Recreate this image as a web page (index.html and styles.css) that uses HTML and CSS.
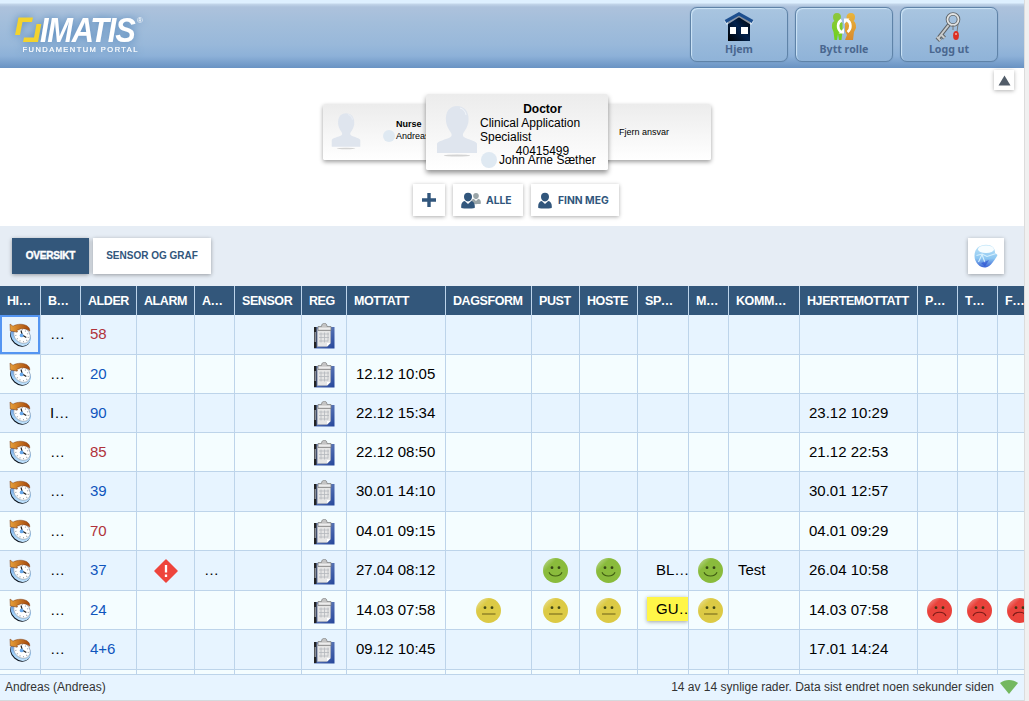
FILE: index.html
```html
<!DOCTYPE html>
<html lang="no">
<head>
<meta charset="utf-8">
<title>Imatis Fundamentum Portal</title>
<link rel="stylesheet" href="styles.css">
</head>
<body>
<svg class="defs" aria-hidden="true">
  <defs>
    <linearGradient id="gHouse" x1="0" y1="1" x2="1" y2="0"><stop offset="0" stop-color="#000"/><stop offset=".5" stop-color="#03224d"/><stop offset="1" stop-color="#000"/></linearGradient>
    <linearGradient id="gGreen" x1="0" y1="0" x2="0" y2="1"><stop offset="0" stop-color="#8fc63f"/><stop offset="1" stop-color="#6fd21c"/></linearGradient>
    <linearGradient id="gOrange" x1="0" y1="0" x2="0" y2="1"><stop offset="0" stop-color="#e9b53c"/><stop offset="1" stop-color="#d98a2c"/></linearGradient>
    <linearGradient id="gArrow" x1="0" y1="0" x2="1" y2="0"><stop offset="0" stop-color="#e8a03a"/><stop offset="1" stop-color="#a34408"/></linearGradient>
    <linearGradient id="gRim" x1="0" y1="0" x2="1" y2="1"><stop offset="0" stop-color="#2659b8"/><stop offset=".6" stop-color="#9ccdf8"/><stop offset="1" stop-color="#d8efff"/></linearGradient>
    <linearGradient id="gBoard" x1="0" y1="0" x2="1" y2="1"><stop offset="0" stop-color="#7f97c8"/><stop offset="1" stop-color="#24459a"/></linearGradient>
    <linearGradient id="gOrb" x1="0" y1="0" x2="0" y2="1"><stop offset="0" stop-color="#b8e2f8"/><stop offset=".6" stop-color="#7fc0f0"/><stop offset="1" stop-color="#2450d0"/></linearGradient>
    <linearGradient id="gShine" x1="0" y1="0" x2=".6" y2=".6"><stop offset="0" stop-color="#fff" stop-opacity=".55"/><stop offset=".5" stop-color="#fff" stop-opacity="0"/></linearGradient>
  </defs>
  <symbol id="clock" viewBox="0 0 22 24">
    <ellipse cx="11.200" cy="14" rx="11" ry="8.800" transform="rotate(42 11.200 14)" fill="#0c141e"/>
    <ellipse cx="11.800" cy="13" rx="11" ry="8.900" transform="rotate(42 11.800 13)" fill="url(#gRim)"/>
    <ellipse cx="13" cy="12.300" rx="8.800" ry="7.400" transform="rotate(42 13 12.300)" fill="#fff" stroke="#8a9097" stroke-width=".5"/>
    <ellipse cx="13" cy="12.500" rx="6.800" ry="5.600" transform="rotate(42 13 12.500)" fill="none" stroke="#a4aab0" stroke-width="1.300" stroke-dasharray="1 2.500"/>
    <path d="M12 7.500l1.300 4.600 4 2.500" stroke="#222" stroke-width="1.200" fill="none"/>
    <circle cx="12.600" cy="12.400" r="1.900" fill="#6aa9ec"/>
    <path d="M1 1l3 2.200C8 .6 16 .3 19.500 4.200c1 1.100 1.300 2.300 1.200 4C17.500 5 12 5 8 7.300L8.500 9 1.300 8z" fill="url(#gArrow)" stroke="#7d3a10" stroke-width=".5"/>
  </symbol>
  <symbol id="clip" viewBox="0 0 21 26">
    <path d="M0 4h20.500v21.500H0z" fill="url(#gBoard)"/>
    <path d="M0 4h2.500v21H0z" fill="#222"/><path d="M.5 9h1.500v10H.5z" fill="#8a8d94"/>
    <path d="M3.500 6h13v14l-3.500 3.500H3.500z" fill="#e6e6e6" stroke="#b5b5b5" stroke-width=".5"/>
    <path d="M4 3.500h3.500C7.500 1 9 .3 10.300.3s2.700.7 2.700 3.200h4v4H4z" fill="#c4c4c4" stroke="#7d7d7d" stroke-width=".7"/>
    <path d="M4.700 4.600h11.600v2H4.700z" fill="#ededed"/>
    <path d="M5 11h10M5 14.500h10M5 18h9M7 9.500v10M10.500 9.500v10M14 9.500v9" stroke="#b4b7bc" stroke-width=".8"/>
    <path d="M13 23.500l3.500-3.500h-3.500z" fill="#fff"/>
  </symbol>
  <symbol id="eyes" viewBox="0 0 25 25">
    <circle cx="12.500" cy="12.500" r="12.500" fill="url(#gShine)"/>
    <circle cx="9" cy="9.700" r="1.400" fill="#27330f" fill-opacity=".85"/><circle cx="16" cy="9.700" r="1.400" fill="#27330f" fill-opacity=".85"/>
  </symbol>
  <symbol id="happy" viewBox="0 0 25 25"><circle cx="12.500" cy="12.500" r="12.500" fill="#8abb3c"/><use href="#eyes"/><path d="M6 14.300c2 5 11 5 13 0" fill="none" stroke="#3f5c12" stroke-width="1.100"/></symbol>
  <symbol id="flat" viewBox="0 0 25 25"><circle cx="12.500" cy="12.500" r="12.500" fill="#dcca45"/><use href="#eyes"/><path d="M6 16h13.500" stroke="#7e711f" stroke-width="1.200"/></symbol>
  <symbol id="sad" viewBox="0 0 25 25"><circle cx="12.500" cy="12.500" r="12.500" fill="#e9423b"/><use href="#eyes"/><path d="M6 18c2-5 11-5 13 0" fill="none" stroke="#7b1b17" stroke-width="1.100"/></symbol>
  <symbol id="alert" viewBox="0 0 24 24"><path d="M12 1l11 11-11 11L1 12z" fill="#ee443c" stroke="#ee443c" stroke-width="1.500" stroke-linejoin="round"/><path d="M12 6v7.500M12 15.500v2.500" stroke="#fff" stroke-width="2.300"/></symbol>
  <symbol id="avatar" viewBox="0 0 42 52">
    <ellipse cx="21" cy="50.500" rx="13" ry="1" fill="#d3d3d3"/>
    <path d="M1 48V38.500C3 35 14 34 15.500 31c.5-2-.5-3.500-2-5.500-2-3-3-6-3.500-9C9 6 14 1 21 1s12.500 5 11.500 15.500c-.5 3-1.500 6-3.500 9-1.500 2-2.500 3.500-2 5.500C28.500 34 39 35 41 38.500V48z" fill="#dfe5ee"/>
    <path d="M24 3c3 .8 5.500 3 6 7" fill="none" stroke="#f3f6fa" stroke-width=".9"/>
  </symbol>
  <symbol id="person" viewBox="0 0 14 16"><path d="M3 4.300C3 1.800 4.500.3 7 .3s4 1.500 4 4C11 6.500 9.500 9 7 9S3 6.500 3 4.300zM.3 15.500c-.5-4 .7-6.500 3.500-7L7 11.500l3.200-3c2.800.5 4 3 3.500 7-3 .7-10.400.7-13.400 0z" fill="currentColor"/></symbol>
</svg>

<div class="portal">
  <header class="top">
    <svg class="logo" width="150" height="60" viewBox="0 0 150 60">
      <path d="M18.500 17.500H33l-1 4.500h-9.500L20 35h-5z" fill="#f3d32e"/>
      <path d="M36.500 24h4.800L38 42H23l1-4.500h10z" fill="#f3d32e"/>
      <g transform="scale(.92 1.05)"><text class="logo-name" x="43.500" y="40" textLength="104">IMATIS</text></g>
      <text class="logo-reg" x="137" y="23">®</text>
      <text class="logo-sub" x="22.500" y="52" textLength="115">FUNDAMENTUM PORTAL</text>
    </svg>
    <nav class="nav">
      <a class="nav-btn"><svg width="30" height="30" viewBox="0 0 30 30"><path d="M4 10l11-7 11 7v19H4z" fill="url(#gHouse)"/><path d="M1.500 11L15 2.500 28.500 11" fill="none" stroke="#fff" stroke-width="4.600" opacity=".55"/><path d="M1.500 9.500L15 1.800l13.500 7.700" fill="none" stroke="#1d4f8f" stroke-width="3.200"/><path d="M6 15h6v7H6zM17 15h7v7h-7z" fill="#fff"/></svg><span>Hjem</span></a>
      <a class="nav-btn"><svg width="30" height="30" viewBox="0 0 30 30"><path d="M8 1c3 0 4 2 4 4 0 1.500-1 3-1.500 4l3 2v8l-1 9H10l-1-6-1 6H5.500L4.500 20 3 16c0-4 0-6 2.500-7C4.500 8 4 6.500 4 5c0-2 1-4 4-4z" fill="url(#gGreen)"/><path d="M22 1c3 0 4 2 4 4 0 1.500-.5 3-1.500 4 2 1 2.500 3 2.500 7l-2 4-1 8h-8l2-5-2-4v-8l3-2c-.7-1-1.500-2.500-1.500-4 0-2 1.500-4 4.500-4z" fill="url(#gOrange)"/><path d="M12.500 8c-4.500 2.500-4.500 9-.5 12M18 8c4.500 2.500 4.500 9 .5 12" fill="none" stroke="#fff" stroke-width="2.600"/><path d="M9.500 21.500h5.500v-5.500zM20.500 6.500h-5.500v5.500z" fill="#fff"/></svg><span>Bytt rolle</span></a>
      <a class="nav-btn"><svg width="30" height="30" viewBox="0 0 30 30"><path d="M15.500 12L4.500 26M7.500 23l3 3M3 25l3.500 3.500" stroke="#5f6468" stroke-width="4" fill="none"/><path d="M15.500 12L4.500 26M7.500 23l3 3M3 25l3.500 3.500" stroke="#c9cccd" stroke-width="2" fill="none"/><circle cx="19" cy="7.500" r="5.500" fill="none" stroke="#62676b" stroke-width="3.600"/><circle cx="19" cy="7.500" r="5.500" fill="none" stroke="#e2e4e4" stroke-width="1.800"/><path d="M19 13v5M24 12l-1 8" stroke="#777" stroke-width="1"/><ellipse cx="22" cy="23.500" rx="2.900" ry="4.500" fill="#dc2f24"/><circle cx="22" cy="22" r="1" fill="#f4b0a8"/></svg><span>Logg ut</span></a>
    </nav>
  </header>

  <section class="roles">
    <button class="collapse" aria-label="Skjul"><svg width="13" height="11" viewBox="0 0 13 11"><path d="M6.500.5L12.500 10.500H.5z" fill="#525d69"/></svg></button>
    <div class="cards">
      <div class="card card-left">
        <svg class="av-small" width="30" height="38"><use href="#avatar"/></svg>
        <div class="nurse"><b>Nurse</b><span><i class="dot"></i>Andreas</span></div>
      </div>
      <div class="card card-main">
        <svg class="av-big" width="42" height="52"><use href="#avatar"/></svg>
        <div class="doctor">
          <b>Doctor</b>
          <p>Clinical Application<br>Specialist</p>
          <span class="phone">40415499</span>
          <span class="name"><i class="dot dot-big"></i>John Arne Sæther</span>
        </div>
      </div>
      <div class="card card-right">Fjern ansvar</div>
    </div>
    <div class="actions">
      <button class="act plus" aria-label="Legg til"><svg width="14" height="14" viewBox="0 0 14 14"><path d="M7 0v14M0 7h14" stroke="#31567c" stroke-width="3.400"/></svg></button>
      <button class="act alle"><svg width="20" height="17" viewBox="0 0 20 17"><g color="#9aa5a8"><use href="#person" x="10" y="0" width="10" height="13"/></g><g color="#31567c"><use href="#person" x="0" y="0" width="14" height="17"/></g></svg>ALLE</button>
      <button class="act finn"><svg width="14" height="17"><use href="#person"/></svg>FINN MEG</button>
    </div>
  </section>

  <div class="tabs">
    <button class="tab active">OVERSIKT</button>
    <button class="tab">SENSOR OG GRAF</button>
    <button class="orb" aria-label="Visning"><svg width="24" height="24" viewBox="0 0 24 24"><path d="M.5 12C.5 4 6 .8 12 .8c6 0 9 3 9 8.200l2.500 2c-2 4-7 12-12 12.500S.5 19 .5 12z" fill="url(#gOrb)" opacity=".9"/><ellipse cx="12" cy="5.300" rx="8" ry="3.800" fill="#f7fdff"/><path d="M2.500 11.500l5.500-1.500 5 2.500 9-3M4.500 18l3.500-7.500 3 8" stroke="#d5effd" stroke-width="1.100" fill="none"/><path d="M7 19l3-1 5-2-4 6.500z" fill="#2a4fd0" opacity=".6"/></svg></button>
  </div>

  <div class="grid">
    <table>
      <colgroup><col class="w41"><col class="w40"><col class="w56"><col class="w58"><col class="w40"><col class="w67"><col class="w45"><col class="w99"><col class="w86"><col class="w48"><col class="w58"><col class="w51"><col class="w40"><col class="w71"><col class="w118"><col class="w40"><col class="w40"><col class="w40"></colgroup>
      <thead><tr><th>HI…</th><th>B…</th><th>ALDER</th><th>ALARM</th><th>A…</th><th>SENSOR</th><th>REG</th><th>MOTTATT</th><th>DAGSFORM</th><th>PUST</th><th>HOSTE</th><th>SP…</th><th>M…</th><th>KOMM…</th><th>HJERTEMOTTATT</th><th>P…</th><th>T…</th><th>F…</th></tr></thead>
      <tbody>
        <tr class="tall"><td class="ic sel"><svg class="clock"><use href="#clock"/></svg></td><td>…</td><td class="red">58</td><td></td><td></td><td></td><td class="ic"><svg class="clip"><use href="#clip"/></svg></td><td></td><td></td><td></td><td></td><td></td><td></td><td></td><td></td><td></td><td></td><td></td></tr>
        <tr><td class="ic"><svg class="clock"><use href="#clock"/></svg></td><td>…</td><td class="blue">20</td><td></td><td></td><td></td><td class="ic"><svg class="clip"><use href="#clip"/></svg></td><td>12.12 10:05</td><td></td><td></td><td></td><td></td><td></td><td></td><td></td><td></td><td></td><td></td></tr>
        <tr><td class="ic"><svg class="clock"><use href="#clock"/></svg></td><td>I…</td><td class="blue">90</td><td></td><td></td><td></td><td class="ic"><svg class="clip"><use href="#clip"/></svg></td><td>22.12 15:34</td><td></td><td></td><td></td><td></td><td></td><td></td><td>23.12 10:29</td><td></td><td></td><td></td></tr>
        <tr><td class="ic"><svg class="clock"><use href="#clock"/></svg></td><td>…</td><td class="red">85</td><td></td><td></td><td></td><td class="ic"><svg class="clip"><use href="#clip"/></svg></td><td>22.12 08:50</td><td></td><td></td><td></td><td></td><td></td><td></td><td>21.12 22:53</td><td></td><td></td><td></td></tr>
        <tr class="tall"><td class="ic"><svg class="clock"><use href="#clock"/></svg></td><td>…</td><td class="blue">39</td><td></td><td></td><td></td><td class="ic"><svg class="clip"><use href="#clip"/></svg></td><td>30.01 14:10</td><td></td><td></td><td></td><td></td><td></td><td></td><td>30.01 12:57</td><td></td><td></td><td></td></tr>
        <tr><td class="ic"><svg class="clock"><use href="#clock"/></svg></td><td>…</td><td class="red">70</td><td></td><td></td><td></td><td class="ic"><svg class="clip"><use href="#clip"/></svg></td><td>04.01 09:15</td><td></td><td></td><td></td><td></td><td></td><td></td><td>04.01 09:29</td><td></td><td></td><td></td></tr>
        <tr class="tall"><td class="ic"><svg class="clock"><use href="#clock"/></svg></td><td>…</td><td class="blue">37</td><td class="ic"><svg class="alert"><use href="#alert"/></svg></td><td>…</td><td></td><td class="ic"><svg class="clip"><use href="#clip"/></svg></td><td>27.04 08:12</td><td></td><td class="ic"><svg class="face"><use href="#happy"/></svg></td><td class="ic"><svg class="face"><use href="#happy"/></svg></td><td><span class="tag">BL…</span></td><td class="ic"><svg class="face"><use href="#happy"/></svg></td><td>Test</td><td>26.04 10:58</td><td></td><td></td><td></td></tr>
        <tr><td class="ic"><svg class="clock"><use href="#clock"/></svg></td><td>…</td><td class="blue">24</td><td></td><td></td><td></td><td class="ic"><svg class="clip"><use href="#clip"/></svg></td><td>14.03 07:58</td><td class="ic"><svg class="face"><use href="#flat"/></svg></td><td class="ic"><svg class="face"><use href="#flat"/></svg></td><td class="ic"><svg class="face"><use href="#flat"/></svg></td><td><span class="tag yellow">GU…</span></td><td class="ic"><svg class="face"><use href="#flat"/></svg></td><td></td><td>14.03 07:58</td><td class="ic"><svg class="face"><use href="#sad"/></svg></td><td class="ic"><svg class="face"><use href="#sad"/></svg></td><td class="ic"><svg class="face"><use href="#sad"/></svg></td></tr>
        <tr class="tall"><td class="ic"><svg class="clock"><use href="#clock"/></svg></td><td>…</td><td class="blue">4+6</td><td></td><td></td><td></td><td class="ic"><svg class="clip"><use href="#clip"/></svg></td><td>09.12 10:45</td><td></td><td></td><td></td><td></td><td></td><td></td><td>17.01 14:24</td><td></td><td></td><td></td></tr>
        <tr><td></td><td></td><td></td><td></td><td></td><td></td><td></td><td></td><td></td><td></td><td></td><td></td><td></td><td></td><td></td><td></td><td></td><td></td></tr>
      </tbody>
    </table>
  </div>

  <footer class="status">
    <span>Andreas (Andreas)</span>
    <span class="rows">14 av 14 synlige rader. Data sist endret noen sekunder siden<svg width="18" height="14" viewBox="0 0 18 14"><path d="M0 3c5-4 13-4 18 0L9 14z" fill="#74b85f"/></svg></span>
  </footer>
</div>
</body>
</html>
```

FILE: styles.css
```css
* { box-sizing: border-box; }
body {
  margin: 0;
  height: 701px;
  overflow: hidden;
  background: #f0f0f0;
  font-family: "Liberation Sans", Arial, sans-serif;
  color: #000;
}
.defs { position: absolute; width: 0; height: 0; }
svg { display: block; flex: none; }
button { margin: 0; padding: 0; border: 0; font-family: inherit; background: #fff; }

.portal {
  display: flex;
  flex-direction: column;
  width: 1024px;
  height: 701px;
  background: #fff;
  border-bottom: 1px solid #d5d9dd;
  box-shadow: 1px 0 0 #dcdcdc;
}

/* Top bar */
.top {
  flex: none;
  display: flex;
  justify-content: space-between;
  height: 68px;
  padding-right: 26px;
  background: linear-gradient(#def0ff 0, #def0ff 3px, #c3d6ea 4px, #adc2dc 7px, #a3bedb 22px, #98b8da 45px, #8db1d8 56px, #6993c3 68px);
}
.logo { filter: drop-shadow(0 0 4px #4f83b8); }
.logo-name { font: italic bold 33.5px "Liberation Sans", Arial, sans-serif; fill: #fff; }
.logo-reg { font-size: 8px; fill: #fff; }
.logo-sub { font-size: 7.5px; fill: #fff; stroke: #fff; stroke-width: .2px; }
.nav { display: flex; gap: 7px; padding-top: 7px; }
.nav-btn {
  display: flex;
  flex-direction: column;
  align-items: center;
  width: 98px;
  height: 55px;
  padding-top: 4px;
  border: 1px solid #5f83a8;
  border-radius: 7px;
  background: linear-gradient(#a9c5e0, #8fb3d8);
  box-shadow: inset 1px 1px 1px #cfe6f8, 0 0 1px #587da3;
  font: bold 10.6px/14px "Noto Sans", sans-serif;
  color: #4a678f;
}

/* Role picker */
.roles { position: relative; flex: none; height: 158px; padding-top: 26px; }
.collapse {
  position: absolute;
  top: 2px;
  right: 10px;
  display: grid;
  place-items: center;
  width: 20px;
  height: 20px;
  box-shadow: 0 1px 4px rgba(0, 0, 0, .3);
}
.cards { display: flex; align-items: center; height: 76px; padding-left: 323px; }
.card {
  flex: none;
  display: flex;
  background: linear-gradient(#ececec, #fff);
  box-shadow: 0 2px 4px rgba(0, 0, 0, .38);
  border-radius: 2px;
}
.card-left { width: 120px; height: 56px; padding: 8px 0 0 8px; }
.card-main { z-index: 1; width: 182px; height: 76px; margin: 0 -17px; padding: 8px 3px 0 10px; box-shadow: 0 3px 5px rgba(0, 0, 0, .42); }
.card-right { width: 120px; height: 56px; padding: 0 0 1px 28px; align-items: center; font-size: 9px; }
.av-big { margin-top: 3px; }
.nurse { display: flex; flex-direction: column; padding: 6px 0 0 22px; font-size: 9px; line-height: 12px; }
.nurse b { padding-left: 13px; }
.nurse span { display: flex; align-items: center; gap: 1px; }
.dot { width: 12px; height: 12px; border-radius: 50%; background: #dfe9f2; }
.dot-big { width: 16px; height: 16px; }
.doctor { display: flex; flex-direction: column; width: 125px; margin-left: 2px; font-size: 12px; line-height: 14px; }
.doctor b, .phone { text-align: center; }
.doctor p { margin: 0; white-space: nowrap; }
.name { display: flex; align-items: center; gap: 2px; height: 16px; margin-top: -6px; padding-left: 1px; white-space: nowrap; }

.actions { display: flex; gap: 8px; padding: 14px 0 0 413px; }
.act {
  display: flex;
  align-items: center;
  height: 32px;
  box-shadow: 0 1px 4px rgba(0, 0, 0, .32);
  font: bold 10.3px Inter, sans-serif;
  color: #31567c;
}
.plus { width: 32px; justify-content: center; }
.alle { width: 70px; padding-left: 8px; gap: 5px; }
.finn { width: 88px; padding-left: 7px; gap: 6px; }

/* View tabs */
.tabs { flex: none; display: flex; gap: 4px; height: 60px; padding: 12px 20px 12px 12px; background: #e6edf5; }
.tab {
  width: 118px;
  height: 36px;
  padding-bottom: 2px;
  font-size: 10px;
  font-weight: bold;
  color: #31567c;
  box-shadow: 0 1px 4px rgba(0, 0, 0, .35);
}
.tab.active { width: 77px; letter-spacing: -.2px; background: #33577b; color: #fff; -webkit-text-stroke: .4px #fff; }
.orb { display: grid; place-items: center; width: 36px; height: 36px; margin-left: auto; box-shadow: 0 1px 4px rgba(0, 0, 0, .32); }

/* Patient table */
.grid { flex: none; height: 388px; overflow: hidden; }
table { table-layout: fixed; width: 1038px; border-collapse: separate; border-spacing: 0; }
.w40 { width: 40px; }
.w41 { width: 41px; }
.w45 { width: 45px; }
.w48 { width: 48px; }
.w51 { width: 51px; }
.w56 { width: 56px; }
.w58 { width: 58px; }
.w67 { width: 67px; }
.w71 { width: 71px; }
.w86 { width: 86px; }
.w99 { width: 99px; }
.w118 { width: 118px; }
th {
  height: 29px;
  padding: 0 0 0 7px;
  border-right: 1px solid #bdd4ea;
  background: #33577b;
  color: #fff;
  font-size: 12.5px;
  letter-spacing: -.42px;
  text-align: left;
  white-space: nowrap;
  overflow: hidden;
}
td {
  height: 39px;
  padding: 0 0 2px 9px;
  border-right: 1px solid #bdd4ea;
  border-bottom: 1px solid #bdd4ea;
  background: #f4fdff;
  font-size: 15px;
  line-height: 17px;
  white-space: nowrap;
  overflow: hidden;
}
.tall td { height: 40px; }
tbody tr:nth-child(odd) td { background: #e7f4ff; }
td.ic { padding: 0 9px; }
.ic svg { margin: 0 auto; }
.sel { box-shadow: inset 0 0 0 2px #5495f2; }
.red { color: #b0323b; }
.blue { color: #0f55bd; }
.clock { width: 22px; height: 24px; }
.clip { width: 21px; height: 26px; position: relative; top: 1px; }
.face { width: 25px; height: 25px; }
.alert { width: 24px; height: 24px; }
.tag { display: block; height: 24px; padding-left: 9px; line-height: 24px; }
.yellow { background: #fff648; box-shadow: 0 1px 4px rgba(0, 0, 0, .35); }

/* Status line */
.status {
  flex: none;
  display: flex;
  justify-content: space-between;
  align-items: center;
  height: 26px;
  padding: 0 6px 2px 5px;
  border-top: 1px solid #bdd4ea;
  background: #e7f4ff;
  font-size: 12px;
  color: #333;
}
.rows { display: flex; align-items: center; gap: 6px; }
```
